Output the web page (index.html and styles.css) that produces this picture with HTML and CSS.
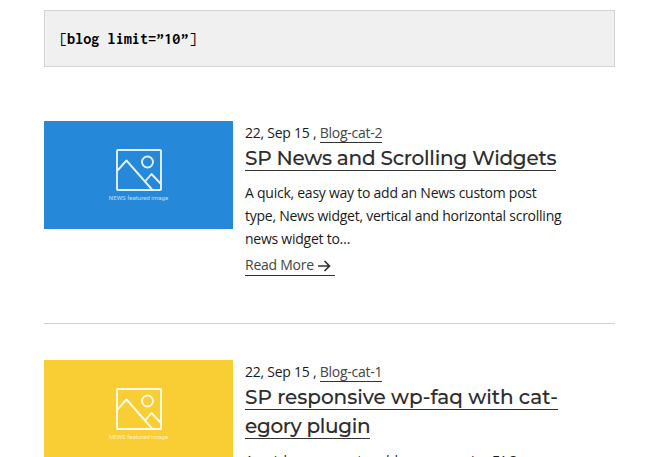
FILE: index.html
```html
<!DOCTYPE html>
<html lang="en">
<head>
<meta charset="utf-8">
<title>Blog</title>
<link rel="stylesheet" href="styles.css">
</head>
<body>
<svg class="defs" width="0" height="0">
  <symbol id="picture" viewBox="0 0 46 42">
    <g fill="none" stroke="currentColor" stroke-width="1.9" stroke-linejoin="round">
      <rect x="1" y="1" width="44" height="40" rx="1"/>
      <circle cx="31.5" cy="13" r="5.5"/>
      <path d="M1.5 21.5 10.5 11.5 36 40.5M29 32.5 35.5 25 44.5 34.5"/>
    </g>
  </symbol>
</svg>
<main class="page">
  <pre class="shortcode"><code><span>[</span>blog limit=”10”<span>]</span></code></pre>
  <article class="post">
    <div class="thumb blue">
      <svg class="picture"><use href="#picture"/></svg>
      <span class="caption">NEWS featured image</span>
    </div>
    <div class="body">
      <p class="meta">22, Sep 15 , <a>Blog-cat-2</a></p>
      <h2><a class="t1">SP News and Scrolling Widgets</a></h2>
      <p class="text">A quick, easy way to add an News custom post<br>type, News widget, vertical and horizontal scrolling<br>news widget to…</p>
      <a class="more">Read More<svg class="arrow" viewBox="0 0 13 12"><path d="M0 6H11.500M6.500 1 11.500 6 6.500 11"/></svg></a>
    </div>
  </article>
  <article class="post second">
    <div class="thumb yellow">
      <svg class="picture"><use href="#picture"/></svg>
      <span class="caption">NEWS featured image</span>
    </div>
    <div class="body">
      <p class="meta">22, Sep 15 , <a>Blog-cat-1</a></p>
      <h2><a class="t2">SP responsive wp-faq with cat-</a><br><a class="t3">egory plugin</a></h2>
      <p class="text">A quick, easy way to add an responsive FAQs</p>
    </div>
  </article>
</main>
</body>
</html>
```
FILE: styles.css
```css
* { box-sizing: border-box; }
html, body { height: 100%; }
body {
  margin: 0;
  overflow: hidden;
  background: #fff;
  color: #1a1a1a;
  font: 14px/23px "Open Sans", "Noto Sans", sans-serif;
  letter-spacing: -.25px;
}
.defs { position: absolute; }
.page { width: 571px; height: 457px; overflow: hidden; margin-left: 44px; padding-top: 10px; }
.shortcode {
  height: 57px;
  margin: 0;
  padding: 16px 14px;
  border: 1px solid #d4d4d4;
  background: #f0f0f0;
}
.shortcode code {
  display: inline-block;
  font: bold 16.2px/23px Inconsolata, "DejaVu Sans Mono", monospace;
  letter-spacing: 0;
  color: #000;
}
.shortcode span { font-weight: normal; }
.post { display: flex; gap: 12px; height: 203px; margin-top: 54px; border-bottom: 1px solid #d0d0d0; }
.second { margin-top: 36px; }
.thumb {
  display: flex;
  flex-direction: column;
  align-items: center;
  width: 189px;
  height: 108px;
  padding-top: 28px;
  color: #e3f0fb;
}
.blue { background: #2588d8; }
.yellow { background: #f9cd34; color: #fffbe9; }
.picture { width: 46px; height: 42px; }
.caption { margin-top: 3px; font: 6px/7px Roboto, sans-serif; opacity: .8; letter-spacing: .05px; }
.body { flex: 1; white-space: nowrap; }
p, h2 { margin: 0; }
.meta { height: 23px; }
.meta a, .more { color: #444; border-bottom: 1px solid #333; }
h2 { color: #2d2d2d; font: 500 20px/29px Montserrat, Inter, sans-serif; letter-spacing: 0; -webkit-text-stroke: .1px #2d2d2d; }
h2 a { display: inline-block; height: 27px; line-height: 28px; border-bottom: 1px solid #333; vertical-align: top; }
.t1 { letter-spacing: -.24px; }
.t2 { letter-spacing: -.03px; }
.t3 { letter-spacing: -.33px; }
.text { margin-top: 8px; }
.more { display: inline-flex; align-items: center; height: 22px; margin-top: 4px; padding-right: 4px; }
.arrow { width: 13px; height: 12px; margin: 3px 0 0 4px; fill: none; stroke: #333; stroke-width: 1.7; }
```
